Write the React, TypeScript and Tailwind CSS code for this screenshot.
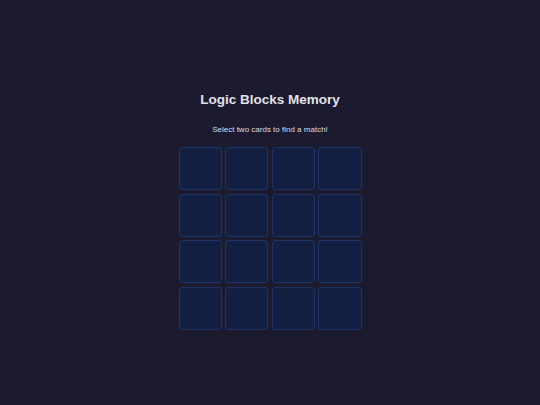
import React from 'react';

const cards = Array.from({ length: 16 }, (_, i) => i);

const App = () => {
    return (
        <main className="min-h-screen w-full bg-[#1c1a2e] flex flex-col items-center pt-[91px] font-['Liberation_Sans',Arial,sans-serif]">
            <h1 className="text-[13.5px] leading-[18px] font-bold text-[#e2e2ea]">Logic Blocks Memory</h1>
            <p className="mt-[16px] text-[8px] leading-[10px] text-[#dcdce4]">Select two cards to find a match!</p>
            <div className="mt-[12px] grid grid-cols-4 gap-[3.5px] w-[183px]">
                {cards.map((id) => (
                    <button
                        key={id}
                        className="h-[43px] rounded-[3px] bg-[#142042] border border-[#1d3466]"
                    />
                ))}
            </div>
        </main>
    );
};

export default App;
